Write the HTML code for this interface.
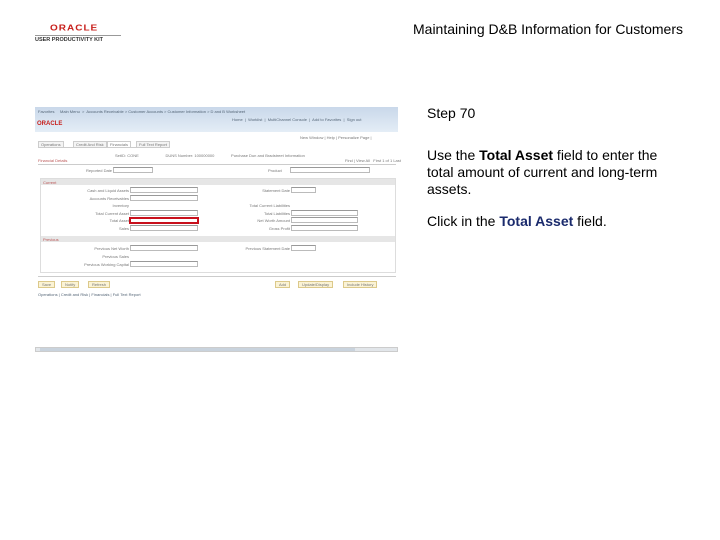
<!DOCTYPE html>
<html><head><meta charset="utf-8"><style>
*{margin:0;padding:0;box-sizing:border-box}
body{width:720px;height:540px;background:#fff;position:relative;overflow:hidden;font-family:"Liberation Sans",sans-serif}
.a{position:absolute;white-space:nowrap}
.t{font-size:4px;color:#777}
.f{position:absolute;height:6px;border:1px solid #bbb;border-top-color:#999;background:#fff}
.r{text-align:right}
</style></head><body>
<div class="a" style="left:50px;top:23px;font-size:10px;font-weight:bold;color:#c8201c;letter-spacing:1px;transform:scaleY(0.8)">ORACLE</div>
<div class="a" style="left:35px;top:35px;width:86px;height:1px;background:#999"></div>
<div class="a" style="left:35px;top:37px;font-size:5.5px;font-weight:bold;color:#333">USER PRODUCTIVITY KIT</div>
<div class="a" style="left:413px;top:21px;font-size:14px;color:#000">Maintaining D&amp;B Information for Customers</div>

<div class="a" style="left:427px;top:105px;font-size:14px;color:#000">Step 70</div>
<div class="a" style="left:427px;top:147px;font-size:14px;line-height:17px;color:#000;white-space:normal;width:240px">Use the <b>Total Asset</b> field to enter the total amount of current and long-term assets.</div>
<div class="a" style="left:427px;top:213px;font-size:14px;color:#000">Click in the <b style="color:#1a2a6c">Total Asset</b> field.</div>

<!-- screenshot -->
<div class="a" style="left:35px;top:107px;width:363px;height:25px;background:linear-gradient(#c9d8ea,#e4edf6)"></div>
<div class="a t" style="left:38px;top:109px;color:#567">Favorites &nbsp;&nbsp;&nbsp; Main Menu &nbsp;&gt;&nbsp; Accounts Receivable &gt; Customer Accounts &gt; Customer Information &gt; D and B Worksheet</div>
<div class="a" style="left:37px;top:121px;font-size:6px;font-weight:bold;color:#c8201c">ORACLE</div>
<div class="a t" style="left:232px;top:117px;color:#567">Home &nbsp;|&nbsp; Worklist &nbsp;|&nbsp; MultiChannel Console &nbsp;|&nbsp; Add to Favorites &nbsp;|&nbsp; Sign out</div>
<div class="a t" style="left:300px;top:135px">New Window | Help | Personalize Page |</div>
<div class="a" style="left:38px;top:140px;width:132px;height:8px;border-bottom:1px solid #ccc"></div>
<div class="a t" style="left:38px;top:141px;border:1px solid #ccc;padding:0 2px;background:#f4f4f4">Operations</div>
<div class="a t" style="left:73px;top:141px;border:1px solid #ccc;padding:0 2px;background:#f4f4f4">Credit And Risk</div>
<div class="a t" style="left:107px;top:141px;border:1px solid #ccc;padding:0 2px;background:#fff">Financials</div>
<div class="a t" style="left:136px;top:141px;border:1px solid #ccc;padding:0 2px;background:#f4f4f4">Full Text Report</div>
<div class="a t" style="left:115px;top:153px">SetID: CONE &nbsp;&nbsp;&nbsp;&nbsp;&nbsp;&nbsp;&nbsp;&nbsp;&nbsp;&nbsp;&nbsp;&nbsp;&nbsp;&nbsp;&nbsp;&nbsp;&nbsp;&nbsp;&nbsp;&nbsp;&nbsp;&nbsp; DUNS Number: 100000000 &nbsp;&nbsp;&nbsp;&nbsp;&nbsp;&nbsp;&nbsp;&nbsp;&nbsp;&nbsp;&nbsp;&nbsp;&nbsp; Purchase Dun and Bradstreet Information</div>
<div class="a t" style="left:38px;top:158px;color:#b55">Financial Details</div>
<div class="a t" style="left:345px;top:158px">Find | View All &nbsp; First 1 of 1 Last</div>
<div class="a" style="left:38px;top:164px;width:358px;height:1px;background:#ccc"></div>
<div class="a t" style="left:86px;top:168px">Reported Date</div>
<div class="f" style="left:113px;top:167px;width:40px"></div>
<div class="a t" style="left:268px;top:168px">Product</div>
<div class="f" style="left:290px;top:167px;width:80px"></div>
<div class="a" style="left:40px;top:178px;width:356px;height:95px;border:1px solid #ddd"></div>
<div class="a" style="left:41px;top:179px;width:354px;height:6px;background:#e6e6e6"></div>
<div class="a t" style="left:43px;top:180px;color:#b55">Current</div>

<div class="a t r" style="left:60px;width:69px;top:188px">Cash and Liquid Assets</div>
<div class="f" style="left:130px;top:187px;width:68px"></div>
<div class="a t r" style="left:60px;width:69px;top:196px">Accounts Receivables</div>
<div class="f" style="left:130px;top:195px;width:68px"></div>
<div class="a t r" style="left:60px;width:69px;top:203px">Inventory</div>
<div class="a t r" style="left:60px;width:69px;top:211px">Total Current Asset</div>
<div class="f" style="left:130px;top:210px;width:68px"></div>
<div class="a t r" style="left:60px;width:69px;top:218px">Total Asset</div>
<div class="a" style="left:129px;top:217px;width:70px;height:7px;border:2px solid #c8101c;background:#fff"></div>
<div class="a t r" style="left:60px;width:69px;top:226px">Sales</div>
<div class="f" style="left:130px;top:225px;width:68px"></div>

<div class="a t r" style="left:220px;width:70px;top:188px">Statement Date</div>
<div class="f" style="left:291px;top:187px;width:25px"></div>
<div class="a t r" style="left:220px;width:70px;top:203px">Total Current Liabilities</div>
<div class="a t r" style="left:220px;width:70px;top:211px">Total Liabilities</div>
<div class="f" style="left:291px;top:210px;width:67px"></div>
<div class="a t r" style="left:220px;width:70px;top:218px">Net Worth Amount</div>
<div class="f" style="left:291px;top:217px;width:67px"></div>
<div class="a t r" style="left:220px;width:70px;top:226px">Gross Profit</div>
<div class="f" style="left:291px;top:225px;width:67px"></div>

<div class="a" style="left:41px;top:236px;width:354px;height:6px;background:#e6e6e6"></div>
<div class="a t" style="left:43px;top:237px;color:#b55">Previous</div>
<div class="a t r" style="left:60px;width:69px;top:246px">Previous Net Worth</div>
<div class="f" style="left:130px;top:245px;width:68px"></div>
<div class="a t r" style="left:60px;width:69px;top:254px">Previous Sales</div>
<div class="a t r" style="left:60px;width:69px;top:262px">Previous Working Capital</div>
<div class="f" style="left:130px;top:261px;width:68px"></div>
<div class="a t r" style="left:220px;width:70px;top:246px">Previous Statement Date</div>
<div class="f" style="left:291px;top:245px;width:25px"></div>

<div class="a" style="left:38px;top:276px;width:358px;height:1px;background:#ccc"></div>
<div class="a t" style="left:38px;top:281px;border:1px solid #dcc98a;background:#fbf3d5;padding:0 3px">Save</div>
<div class="a t" style="left:61px;top:281px;border:1px solid #dcc98a;background:#fbf3d5;padding:0 3px">Notify</div>
<div class="a t" style="left:88px;top:281px;border:1px solid #dcc98a;background:#fbf3d5;padding:0 3px">Refresh</div>
<div class="a t" style="left:275px;top:281px;border:1px solid #dcc98a;background:#fbf3d5;padding:0 3px">Add</div>
<div class="a t" style="left:298px;top:281px;border:1px solid #dcc98a;background:#fbf3d5;padding:0 3px">Update/Display</div>
<div class="a t" style="left:343px;top:281px;border:1px solid #dcc98a;background:#fbf3d5;padding:0 3px">Include History</div>
<div class="a t" style="left:38px;top:292px;color:#567">Operations | Credit and Risk | Financials | Full Text Report</div>
<div class="a" style="left:35px;top:347px;width:363px;height:5px;background:#e2e6ea;border:1px solid #ccc"></div>
<div class="a" style="left:40px;top:348px;width:315px;height:3px;background:#c9d3dd"></div>
</body></html>
